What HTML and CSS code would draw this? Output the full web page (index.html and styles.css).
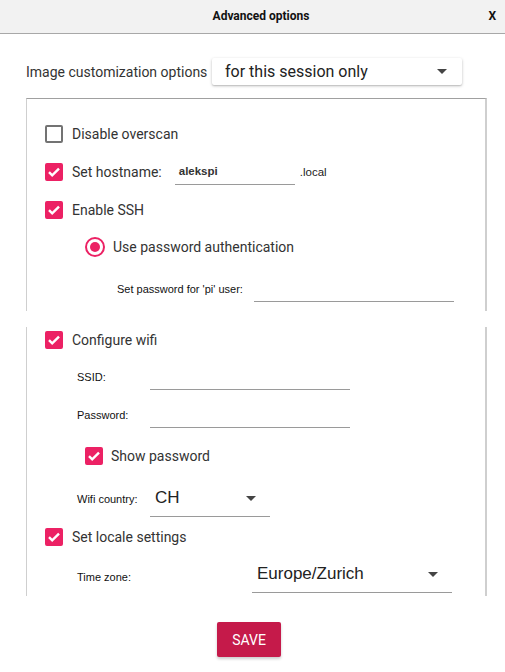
FILE: index.html
```html
<!DOCTYPE html>
<html>
<head>
<meta charset="utf-8">
<link rel="stylesheet" href="styles.css">
</head>
<body>
<div class="header">
  <span class="title">Advanced options</span>
  <span class="close">X</span>
</div>

<div class="scope-row">
  <span class="scope-label">Image customization options</span>
  <div class="scope-combo">
    <span>for this session only</span>
    <span class="arrow"></span>
  </div>
</div>

<div class="frame frame-top">
  <div class="row r-overscan">
    <span class="cb"></span><span class="lbl">Disable overscan</span>
  </div>
  <div class="row r-host">
    <span class="cb on"><svg viewBox="0 0 18 18"><path d="M4 9.2l3.2 3.2L14 5.6" /></svg></span><span class="lbl">Set hostname:</span>
    <span class="field host"><span class="val">alekspi</span></span>
    <span class="suffix">.local</span>
  </div>
  <div class="row r-ssh">
    <span class="cb on"><svg viewBox="0 0 18 18"><path d="M4 9.2l3.2 3.2L14 5.6" /></svg></span><span class="lbl">Enable SSH</span>
  </div>
  <div class="row r-radio">
    <span class="radio"><span class="dot"></span></span><span class="lbl">Use password authentication</span>
  </div>
  <div class="row r-pass">
    <span class="small pi-label">Set password for 'pi' user:</span>
    <span class="field pi-field"></span>
  </div>
</div>

<div class="frame frame-bottom">
  <div class="row r-wifi">
    <span class="cb on"><svg viewBox="0 0 18 18"><path d="M4 9.2l3.2 3.2L14 5.6" /></svg></span><span class="lbl">Configure wifi</span>
  </div>
  <div class="row r-ssid indent">
    <span class="small flabel">SSID:</span>
    <span class="field wfield"></span>
  </div>
  <div class="row r-wpass indent">
    <span class="small flabel">Password:</span>
    <span class="field wfield"></span>
  </div>
  <div class="row r-show">
    <span class="cb on"><svg viewBox="0 0 18 18"><path d="M4 9.2l3.2 3.2L14 5.6" /></svg></span><span class="lbl">Show password</span>
  </div>
  <div class="row r-country indent">
    <span class="small flabel">Wifi country:</span>
    <span class="combo country"><span class="cval">CH</span><span class="arrow"></span></span>
  </div>
  <div class="row r-locale">
    <span class="cb on"><svg viewBox="0 0 18 18"><path d="M4 9.2l3.2 3.2L14 5.6" /></svg></span><span class="lbl">Set locale settings</span>
  </div>
  <div class="row r-tz indent">
    <span class="small tz-label">Time zone:</span>
    <span class="combo tz"><span class="cval">Europe/Zurich</span><span class="arrow"></span></span>
  </div>
</div>

<div class="actions">
  <button class="save">SAVE</button>
</div>
</body>
</html>
```
FILE: styles.css
```css
html, body {
  margin: 0;
  padding: 0;
  background: #ffffff;
}
body {
  width: 505px;
  height: 672px;
  overflow: hidden;
  font-family: Roboto, "Liberation Sans", sans-serif;
  color: #333333;
}

.header {
  height: 33px;
  background: #f2f2f2;
  border-bottom: 1px solid #a8a8a8;
  display: flex;
  align-items: center;
  justify-content: center;
  position: relative;
}
.title {
  font-family: Roboto, sans-serif;
  font-weight: bold;
  font-size: 12px;
  color: #111;
  margin-left: 17px;
  margin-top: -1px;
}
.close {
  position: absolute;
  right: 9px;
  top: 9px;
  font-family: Roboto, sans-serif;
  font-weight: bold;
  font-size: 12px;
  color: #111;
}

.scope-row {
  display: flex;
  align-items: center;
  padding-left: 26px;
  margin-top: 24px;
  height: 27px;
}
.scope-label {
  font-size: 14px;
  width: 186px;
  white-space: nowrap;
  color: #333;
}
.scope-combo {
  width: 250px;
  height: 27px;
  box-sizing: border-box;
  padding: 0 15px 0 13px;
  display: flex;
  align-items: center;
  justify-content: space-between;
  font-size: 16px;
  color: #222;
  background: #fff;
  border-radius: 2px;
  box-shadow: 0 1px 3px rgba(0,0,0,0.25), 0 1px 1px rgba(0,0,0,0.08);
}
.arrow {
  width: 0;
  height: 0;
  border-left: 5px solid transparent;
  border-right: 5px solid transparent;
  border-top: 5px solid #444;
}

.frame {
  margin-left: 26px;
  width: 458px;
  border-left: 1px solid #cfcfcf;
  border-right: 2px solid #cfcfcf;
  display: flex;
  flex-direction: column;
}
.frame-top {
  margin-top: 13px;
  border-top: 1px solid #a0a0a0;
  padding-top: 22px;
  padding-bottom: 9px;
}
.frame-bottom {
  margin-top: 16px;
  padding-bottom: 3px;
}

.row {
  display: flex;
  align-items: center;
  height: 26px;
  padding-left: 18px;
}
.r-host { margin-top: 12px; }
.r-ssh { margin-top: 12px; }
.r-radio { margin-top: 11px; padding-left: 58px; }
.r-pass { margin-top: 16px; padding-left: 90px; }

.r-ssid { margin-top: 11px; }
.r-wpass { margin-top: 12px; }
.r-show { margin-top: 15px; padding-left: 58px; }
.r-country { margin-top: 12px; height: 36px; }
.r-locale { margin-top: 7px; }
.r-tz { margin-top: 7px; height: 36px; }
.indent { padding-left: 50px; }

.cb {
  width: 18px;
  height: 18px;
  box-sizing: border-box;
  border: 2px solid #737373;
  border-radius: 2px;
  flex: none;
  display: flex;
  align-items: center;
  justify-content: center;
}
.cb.on {
  background: #ec2164;
  border-color: #ec2164;
}
.cb svg {
  width: 18px;
  height: 18px;
  flex: none;
}
.cb svg path {
  fill: none;
  stroke: #ffffff;
  stroke-width: 2.4;
}
.lbl {
  font-size: 14px;
  margin-left: 9px;
  white-space: nowrap;
  color: #333;
}
.r-radio .lbl { margin-left: 8px; }
.r-show .lbl { margin-left: 8px; }

.radio {
  width: 20px;
  height: 20px;
  box-sizing: border-box;
  border: 2px solid #ec2164;
  border-radius: 50%;
  display: flex;
  align-items: center;
  justify-content: center;
  flex: none;
}
.radio .dot {
  width: 10px;
  height: 10px;
  border-radius: 50%;
  background: #ec2164;
}

.field {
  height: 26px;
  box-sizing: border-box;
  border-bottom: 1px solid #9a9a9a;
  display: flex;
  align-items: center;
  flex: none;
}
.host {
  width: 120px;
  margin-left: 13px;
  padding-left: 4px;
}
.val {
  font-family: "Liberation Sans", Arial, sans-serif;
  font-weight: bold;
  font-size: 11.5px;
  color: #333;
  margin-top: -2px;
}
.suffix {
  font-family: "Liberation Sans", Arial, sans-serif;
  font-size: 11.5px;
  margin-left: 5px;
  color: #222;
}

.small {
  font-family: "Liberation Sans", Tahoma, sans-serif;
  font-size: 11px;
  color: #111;
  white-space: nowrap;
  flex: none;
}
.pi-label { width: 137px; }
.pi-field { width: 200px; }
.flabel { width: 73px; }
.wfield { width: 200px; }

.combo {
  height: 36px;
  box-sizing: border-box;
  border-bottom: 1px solid #9a9a9a;
  display: flex;
  align-items: center;
  justify-content: space-between;
  flex: none;
}
.country {
  width: 120px;
  padding: 0 14px 0 5px;
}
.country .cval {
  font-family: "Liberation Sans", Arial, sans-serif;
  font-size: 17px;
  color: #222;
  margin-top: -2px;
}
.tz-label { width: 175px; margin-top: 4px; }
.tz {
  width: 200px;
  padding: 0 14px 0 5px;
}
.tz .cval {
  font-family: "Liberation Sans", Arial, sans-serif;
  font-size: 17px;
  color: #222;
  margin-top: -2px;
}

.actions {
  display: flex;
  justify-content: center;
  padding-right: 7px;
  margin-top: 26px;
}
.save {
  width: 64px;
  height: 35px;
  border: none;
  border-radius: 2px;
  background: #c51a4a;
  color: #fff;
  font-family: Roboto, sans-serif;
  font-size: 14px;
  box-shadow: 0 2px 3px rgba(0,0,0,0.2);
  padding: 0;
}
```
